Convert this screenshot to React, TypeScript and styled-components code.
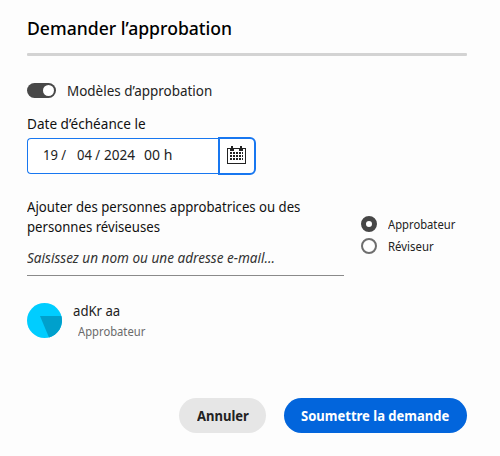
import React from "react";
import styled, { createGlobalStyle } from "styled-components";

const GlobalStyle = createGlobalStyle`
  * { box-sizing: border-box; }
  body {
    margin: 0;
    background: #fdfdfd;
    color: #222;
    font-family: "Noto Sans", "Open Sans", sans-serif;
    font-size: 14px;
    line-height: 20px;
  }
`;

const Dialog = styled.main`
  width: 500px;
  height: 456px;
  padding: 14px 33px 0 27px;
  overflow: hidden;
`;

/* Text set slightly narrower than the face's normal width. */
const Condensed = styled.span<{ $scale: number }>`
  display: block;
  width: max-content;
  white-space: pre;
  transform: scaleX(${(p) => p.$scale});
  transform-origin: left center;
`;

const Title = styled.h1`
  margin: 0;
  height: 39px;
  color: #000;
  font-size: 18px;
  font-weight: 500;
  line-height: 28px;
`;

const Divider = styled.hr`
  height: 3px;
  margin: 0;
  border: 0;
  border-radius: 1px;
  background: #d3d3d3;
`;

const SwitchRow = styled.div`
  display: flex;
  align-items: center;
  gap: 11px;
  height: 20px;
  margin-top: 25px;
`;

const Track = styled.span`
  display: flex;
  justify-content: flex-end;
  width: 29px;
  height: 15px;
  margin-bottom: 1px;
  padding: 2px;
  border-radius: 8px;
  background: #484848;
`;

const Knob = styled.span`
  width: 11px;
  height: 11px;
  border-radius: 50%;
  background: #fff;
`;

const FieldLabel = styled.div`
  margin-top: 13px;
  height: 23px;
  color: #111;
`;

const DateField = styled.div`
  display: flex;
  align-items: center;
  height: 38px;
`;

const DateInput = styled.div`
  display: flex;
  align-items: center;
  width: 191px;
  height: 36px;
  padding: 0 0 2px 15px;
  border: 1px solid #1877f0;
  border-right: 0;
  border-radius: 4px 0 0 4px;
  background: #fff;
`;

const Segment = styled.div<{ $width: number }>`
  flex: none;
  width: ${(p) => p.$width}px;
`;

const CalendarButton = styled.button`
  display: flex;
  align-items: flex-start;
  width: 38px;
  height: 38px;
  padding: 7px 0 0 7px;
  border: 2px solid #1877f0;
  border-radius: 0 6px 6px 0;
  background: #fff;
`;

const People = styled.section`
  display: flex;
  justify-content: space-between;
  margin-top: 22px;
`;

const PeopleField = styled.div`
  width: 317px;
  height: 79px;
  border-bottom: 1px solid #8a8a8a;
  color: #111;
`;

const Placeholder = styled.div`
  margin-top: 11px;
  color: #333;
  font-style: italic;
`;

const RadioGroup = styled.div`
  width: 106px;
  padding-top: 16px;
`;

const RadioRow = styled.div`
  display: flex;
  align-items: center;
  gap: 11px;
  height: 22px;
  font-size: 12px;
  line-height: 22px;
`;

const RadioLabel = styled.div`
  padding-top: 1px;
`;

const RadioMark = styled.span<{ $checked?: boolean }>`
  flex: none;
  width: 16px;
  height: 16px;
  border: ${(p) => (p.$checked ? "5px solid #464646" : "2px solid #6e6e6e")};
  border-radius: 50%;
  background: #fff;
`;

const Person = styled.div`
  display: flex;
  gap: 11px;
  height: 40px;
  margin-top: 25px;
`;

const Avatar = styled.svg`
  flex: none;
  width: 35px;
  height: 35px;
  margin-top: 2px;
`;

const Role = styled.div`
  padding: 1px 0 0 5px;
  color: #6a6a6a;
  font-size: 12px;
`;

const Actions = styled.footer`
  display: flex;
  justify-content: flex-end;
  gap: 18px;
  margin-top: 57px;
`;

const Action = styled.button<{ $primary?: boolean }>`
  width: ${(p) => (p.$primary ? 183 : 87)}px;
  height: 35px;
  padding: 0 0 0 ${(p) => (p.$primary ? 17 : 18)}px;
  border: 0;
  border-radius: 18px;
  background: ${(p) => (p.$primary ? "#0265dc" : "#e6e6e6")};
  color: ${(p) => (p.$primary ? "#fff" : "#222")};
  font: 700 14px/20px "Noto Sans", sans-serif;
`;

const CalendarIcon = () => (
  <svg width="19" height="19" viewBox="0 0 19 19" shapeRendering="crispEdges">
    <path d="M0 2h19v16H0z" fill="#222" />
    <path d="M1 5h17v12H1zM1 3h2v2H1zM7 3h5v2H7zM16 3h2v2h-2z" fill="#fff" />
    <path d="M4 0h2v5H4zM13 0h2v5h-2z" fill="#222" />
    {[6, 9, 12].map((y) =>
      [3, 6, 9, 12, 15].map((x) => (
        <rect key={`${x}-${y}`} x={x} y={y} width={x === 15 ? 1 : 2} height="2" fill="#222" />
      ))
    )}
  </svg>
);

export default function App() {
  return (
    <>
      <GlobalStyle />
      <Dialog>
        <Title><Condensed $scale={0.978}>Demander l’approbation</Condensed></Title>
        <Divider />
        <SwitchRow>
          <Track><Knob /></Track>
          <Condensed $scale={0.96}>Modèles d’approbation</Condensed>
        </SwitchRow>
        <FieldLabel><Condensed $scale={0.97}>Date d’échéance le</Condensed></FieldLabel>
        <DateField>
          <DateInput>
            <Segment $width={34}><Condensed $scale={0.93}>19 /</Condensed></Segment>
            <Segment $width={27}><Condensed $scale={0.93}>04 /</Condensed></Segment>
            <Segment $width={40}><Condensed $scale={0.97}>2024</Condensed></Segment>
            <Segment $width={40}><Condensed $scale={1}>00 h</Condensed></Segment>
          </DateInput>
          <CalendarButton aria-label="Calendrier"><CalendarIcon /></CalendarButton>
        </DateField>
        <People>
          <PeopleField>
            <Condensed $scale={0.94}>Ajouter des personnes approbatrices ou des</Condensed>
            <Condensed $scale={0.94}>personnes réviseuses</Condensed>
            <Placeholder><Condensed $scale={0.969}>Saisissez un nom ou une adresse e-mail…</Condensed></Placeholder>
          </PeopleField>
          <RadioGroup>
            <RadioRow><RadioMark $checked /><RadioLabel><Condensed $scale={0.935}>Approbateur</Condensed></RadioLabel></RadioRow>
            <RadioRow><RadioMark /><RadioLabel><Condensed $scale={0.95}>Réviseur</Condensed></RadioLabel></RadioRow>
          </RadioGroup>
        </People>
        <Person>
          <Avatar viewBox="0 0 35 35">
            <circle cx="17.5" cy="17.5" r="17.5" fill="#00cdff" />
            <path d="M13 13H34.4A17.5 17.5 0 0 1 22 34.4z" fill="#00a0cc" />
          </Avatar>
          <div>
            <Condensed $scale={0.94}>adKr aa</Condensed>
            <Role><Condensed $scale={0.935}>Approbateur</Condensed></Role>
          </div>
        </Person>
        <Actions>
          <Action><Condensed $scale={0.93}>Annuler</Condensed></Action>
          <Action $primary><Condensed $scale={0.93}>Soumettre la demande</Condensed></Action>
        </Actions>
      </Dialog>
    </>
  );
}
